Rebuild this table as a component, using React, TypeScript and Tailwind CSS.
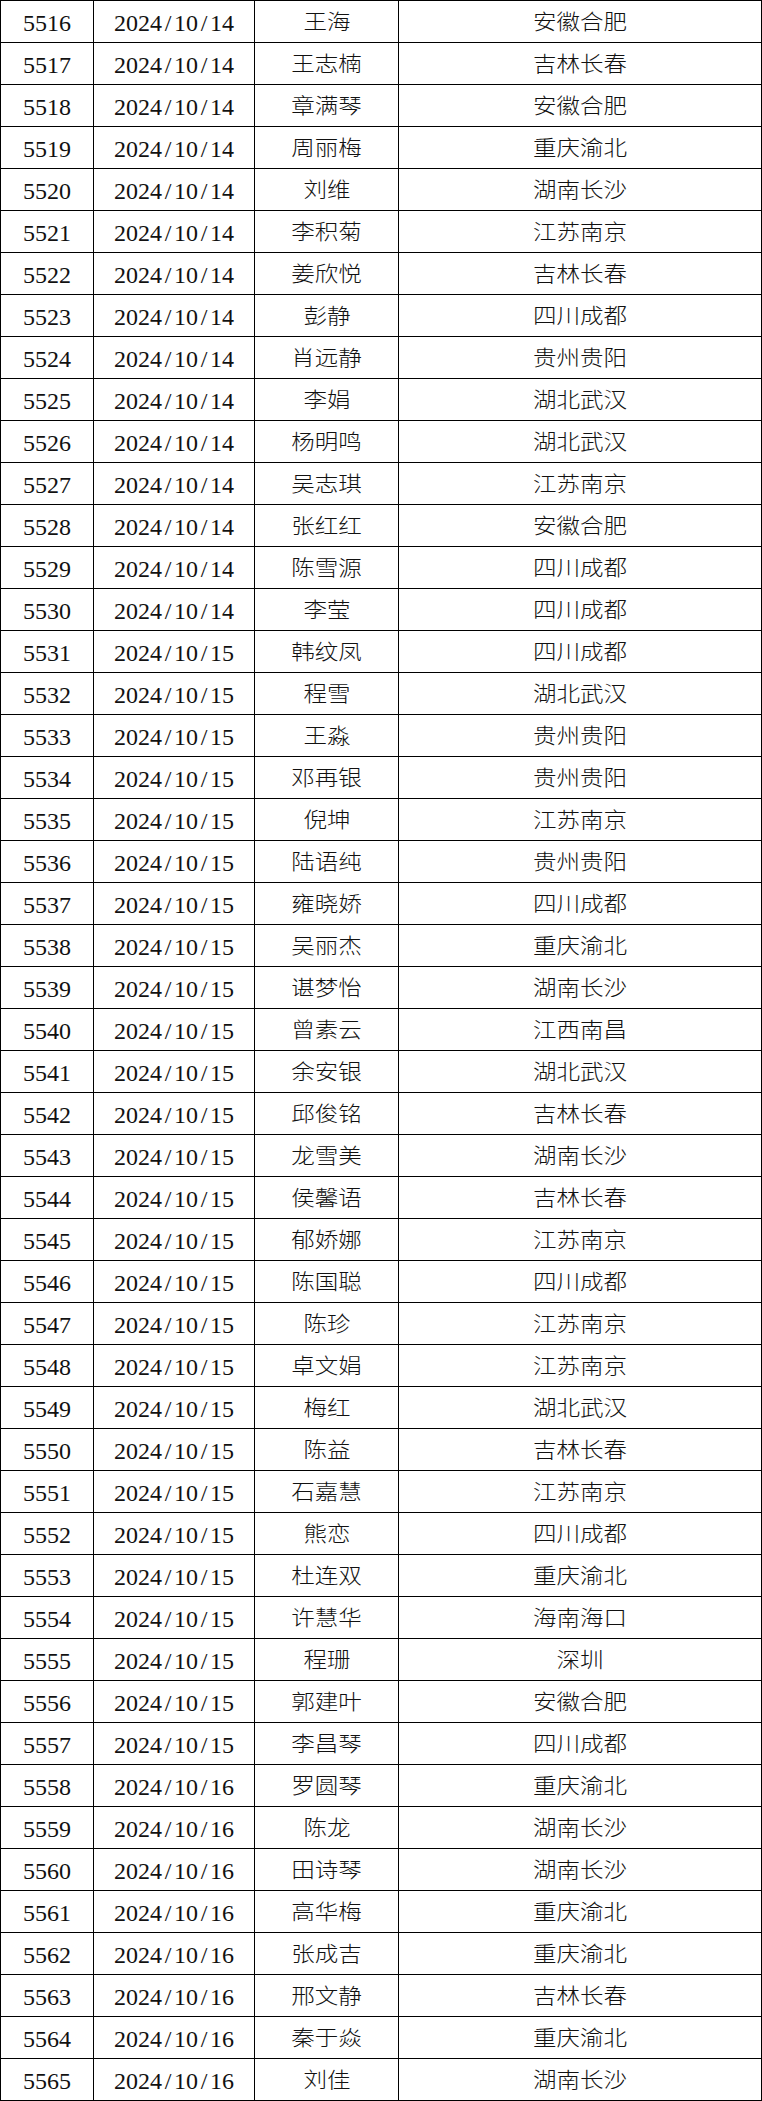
import React from "react";

const raw = `5516 2024/10/14 王海 安徽合肥
5517 2024/10/14 王志楠 吉林长春
5518 2024/10/14 章满琴 安徽合肥
5519 2024/10/14 周丽梅 重庆渝北
5520 2024/10/14 刘维 湖南长沙
5521 2024/10/14 李积菊 江苏南京
5522 2024/10/14 姜欣悦 吉林长春
5523 2024/10/14 彭静 四川成都
5524 2024/10/14 肖远静 贵州贵阳
5525 2024/10/14 李娟 湖北武汉
5526 2024/10/14 杨明鸣 湖北武汉
5527 2024/10/14 吴志琪 江苏南京
5528 2024/10/14 张红红 安徽合肥
5529 2024/10/14 陈雪源 四川成都
5530 2024/10/14 李莹 四川成都
5531 2024/10/15 韩纹凤 四川成都
5532 2024/10/15 程雪 湖北武汉
5533 2024/10/15 王淼 贵州贵阳
5534 2024/10/15 邓再银 贵州贵阳
5535 2024/10/15 倪坤 江苏南京
5536 2024/10/15 陆语纯 贵州贵阳
5537 2024/10/15 雍晓娇 四川成都
5538 2024/10/15 吴丽杰 重庆渝北
5539 2024/10/15 谌梦怡 湖南长沙
5540 2024/10/15 曾素云 江西南昌
5541 2024/10/15 余安银 湖北武汉
5542 2024/10/15 邱俊铭 吉林长春
5543 2024/10/15 龙雪美 湖南长沙
5544 2024/10/15 侯馨语 吉林长春
5545 2024/10/15 郁娇娜 江苏南京
5546 2024/10/15 陈国聪 四川成都
5547 2024/10/15 陈珍 江苏南京
5548 2024/10/15 卓文娟 江苏南京
5549 2024/10/15 梅红 湖北武汉
5550 2024/10/15 陈益 吉林长春
5551 2024/10/15 石嘉慧 江苏南京
5552 2024/10/15 熊恋 四川成都
5553 2024/10/15 杜连双 重庆渝北
5554 2024/10/15 许慧华 海南海口
5555 2024/10/15 程珊 深圳
5556 2024/10/15 郭建叶 安徽合肥
5557 2024/10/15 李昌琴 四川成都
5558 2024/10/16 罗圆琴 重庆渝北
5559 2024/10/16 陈龙 湖南长沙
5560 2024/10/16 田诗琴 湖南长沙
5561 2024/10/16 高华梅 重庆渝北
5562 2024/10/16 张成吉 重庆渝北
5563 2024/10/16 邢文静 吉林长春
5564 2024/10/16 秦于焱 重庆渝北
5565 2024/10/16 刘佳 湖南长沙`;

const rows = raw.split("\n").map((l) => l.trim().split(" "));

const numCell =
  "border border-black p-0 pt-[3px] text-center align-middle leading-[38px] text-[24px] [font-family:'Liberation_Serif',serif]";
const cjkCell =
  "border border-black p-0 pb-[3px] text-center align-middle leading-[38px] text-[21px] font-light [font-family:'Noto_Sans_CJK_SC',sans-serif]";

function DateText({ d }: { d: string }) {
  const parts = d.split("/");
  return (
    <span>
      {parts.map((p, i) => (
        <React.Fragment key={i}>
          {i > 0 && <span className="inline-block w-[12px] text-center">/</span>}
          {p}
        </React.Fragment>
      ))}
    </span>
  );
}

export default function App() {
  return (
    <div className="w-[762px] bg-white text-[#111]">
      <table className="w-[762px] table-fixed border-collapse">
        <colgroup>
          <col className="w-[93px]" />
          <col className="w-[161px]" />
          <col className="w-[144px]" />
          <col />
        </colgroup>
        <tbody>
          {rows.map(([id, date, name, city]) => (
            <tr key={id}>
              <td className={numCell}>{id}</td>
              <td className={numCell}>
                <DateText d={date} />
              </td>
              <td className={cjkCell}>
                <span className="inline-block scale-x-[1.12]">{name}</span>
              </td>
              <td className={cjkCell}>
                <span className="inline-block scale-x-[1.12]">{city}</span>
              </td>
            </tr>
          ))}
        </tbody>
      </table>
    </div>
  );
}
